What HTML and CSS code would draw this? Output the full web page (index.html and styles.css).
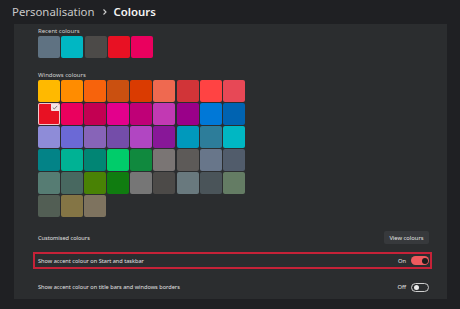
FILE: index.html
```html
<!DOCTYPE html>
<html lang="en">
<head>
<meta charset="utf-8">
<title>Colours</title>
<link rel="stylesheet" href="styles.css">
</head>
<body>
<header class="crumbs">
  <span class="crumb-parent">Personalisation</span>
  <svg class="chev" width="6" height="8" viewBox="0 0 6 8"><path d="M1.5 1.5 L4 4 L1.5 6.5" fill="none" stroke="#cfcfcf" stroke-width="1.1"/></svg>
  <span class="crumb-current">Colours</span>
</header>
<main class="panel">
  <section class="colours">
    <div class="label">Recent colours</div>
    <div class="recent">
      <div class="sw" style="background:#5f7282"></div>
      <div class="sw" style="background:#00b7c3"></div>
      <div class="sw" style="background:#4c4a48"></div>
      <div class="sw" style="background:#e81123"></div>
      <div class="sw" style="background:#ea005e"></div>
    </div>
    <div class="label label-win">Windows colours</div>
    <div class="grid">
      <div class="sw" style="background:#ffb900"></div>
      <div class="sw" style="background:#ff8c00"></div>
      <div class="sw" style="background:#f7630c"></div>
      <div class="sw" style="background:#ca5010"></div>
      <div class="sw" style="background:#da3b01"></div>
      <div class="sw" style="background:#ef6950"></div>
      <div class="sw" style="background:#d13438"></div>
      <div class="sw" style="background:#ff4343"></div>
      <div class="sw" style="background:#e74856"></div>

      <div class="sw selected" style="background:#e81123">
        <span class="badge"><svg width="6" height="5" viewBox="0 0 6 5"><path d="M0.8 2.6 L2.3 4 L5.2 0.9" fill="none" stroke="#7a6a6c" stroke-width="0.9"/></svg></span>
      </div>
      <div class="sw" style="background:#ea005e"></div>
      <div class="sw" style="background:#c30052"></div>
      <div class="sw" style="background:#e3008c"></div>
      <div class="sw" style="background:#bf0077"></div>
      <div class="sw" style="background:#c239b3"></div>
      <div class="sw" style="background:#9a0089"></div>
      <div class="sw" style="background:#0078d7"></div>
      <div class="sw" style="background:#0063b1"></div>

      <div class="sw" style="background:#8e8cd8"></div>
      <div class="sw" style="background:#6b69d6"></div>
      <div class="sw" style="background:#8764b8"></div>
      <div class="sw" style="background:#744da9"></div>
      <div class="sw" style="background:#b146c2"></div>
      <div class="sw" style="background:#881798"></div>
      <div class="sw" style="background:#0099bc"></div>
      <div class="sw" style="background:#2d7d9a"></div>
      <div class="sw" style="background:#00b7c3"></div>

      <div class="sw" style="background:#038387"></div>
      <div class="sw" style="background:#00b294"></div>
      <div class="sw" style="background:#018574"></div>
      <div class="sw" style="background:#00cc6a"></div>
      <div class="sw" style="background:#10893e"></div>
      <div class="sw" style="background:#7a7574"></div>
      <div class="sw" style="background:#5d5a58"></div>
      <div class="sw" style="background:#68768a"></div>
      <div class="sw" style="background:#515c6b"></div>

      <div class="sw" style="background:#567c73"></div>
      <div class="sw" style="background:#486860"></div>
      <div class="sw" style="background:#498205"></div>
      <div class="sw" style="background:#107c10"></div>
      <div class="sw" style="background:#767676"></div>
      <div class="sw" style="background:#4c4a48"></div>
      <div class="sw" style="background:#69797e"></div>
      <div class="sw" style="background:#4a5459"></div>
      <div class="sw" style="background:#647c64"></div>

      <div class="sw" style="background:#525e54"></div>
      <div class="sw" style="background:#847545"></div>
      <div class="sw" style="background:#7e735f"></div>
    </div>
  </section>

  <div class="row">
    <span class="row-text">Customised colours</span>
    <button class="btn">View colours</button>
  </div>

  <div class="row row-hl">
    <div class="hl-box">
      <span class="row-text">Show accent colour on Start and taskbar</span>
      <span class="state">On</span>
      <span class="toggle on"><span class="knob"></span></span>
    </div>
  </div>

  <div class="row row-last">
    <span class="row-text">Show accent colour on title bars and windows borders</span>
    <span class="state">Off</span>
    <span class="toggle off"><span class="knob"></span></span>
  </div>
</main>
</body>
</html>
```

FILE: styles.css
```css
* { box-sizing: border-box; }

html, body {
  margin: 0;
  padding: 0;
}

body {
  width: 460px;
  height: 309px;
  overflow: hidden;
  background: #1f2023;
  font-family: "Noto Sans", "Open Sans", sans-serif;
  color: #e4e4e4;
}

.crumbs {
  height: 24px;
  display: flex;
  align-items: center;
  padding-left: 12px;
  padding-bottom: 1px;
  font-size: 11.4px;
  line-height: 1;
}

.crumb-parent {
  color: #c9c9c9;
}

.chev {
  margin: 1px 6px 0 7px;
}

.crumb-current {
  color: #f4f4f4;
  font-weight: 600;
}

.panel {
  margin: 0 13px 0 14px;
  height: 275px;
  background: #2b2d2f;
  padding-top: 4px;
}

.colours {
  padding-left: 24px;
}

.label {
  font-size: 6px;
  line-height: 7px;
  height: 7px;
  color: #d2d2d2;
  white-space: nowrap;
}

.label-win {
  margin-top: 14px;
}

.recent {
  display: flex;
  gap: 1.3px;
  padding-top: 0.5px;
}

.sw {
  width: 22px;
  height: 22px;
  border-radius: 2px;
}

.grid {
  display: grid;
  grid-template-columns: repeat(9, 22px);
  grid-auto-rows: 22px;
  column-gap: 1.1px;
  row-gap: 1.2px;
  margin-top: 1px;
}

.sw.selected {
  position: relative;
  box-shadow: inset 0 0 0 1px #f1c9ce;
}

.badge {
  position: absolute;
  top: 1px;
  right: 1px;
  width: 8px;
  height: 7px;
  background: #f3e4e6;
  border-radius: 0 1px 0 1px;
  display: flex;
  align-items: center;
  justify-content: center;
}

.row {
  display: flex;
  align-items: center;
  height: 25px;
  padding-left: 24px;
  padding-right: 18px;
}

.colours + .row {
  margin-top: 8px;
}

.row-text {
  font-size: 5.6px;
  color: #e2e2e2;
  flex: 1;
  white-space: nowrap;
}

.btn {
  font-family: inherit;
  font-size: 5.8px;
  color: #e2e2e2;
  background: #37393c;
  border: none;
  border-radius: 2px;
  width: 45px;
  height: 13px;
  padding: 0;
}

.row-hl {
  padding: 2px 15px 6px 19px;
  align-items: flex-start;
}

.hl-box {
  flex: 1;
  height: 17px;
  border: 2px solid #c62238;
  display: flex;
  align-items: center;
  padding-left: 3px;
  padding-right: 1px;
}

.row-last {
  height: 24px;
}

.state {
  font-size: 5.8px;
  color: #e2e2e2;
  margin-right: 5px;
}

.toggle {
  width: 18px;
  height: 9px;
  border-radius: 5px;
  display: flex;
  align-items: center;
  padding: 0 1.5px;
}

.toggle.on {
  background: #ef5a5e;
  justify-content: flex-end;
}

.toggle.on .knob {
  width: 6px;
  height: 6px;
  border-radius: 50%;
  background: #1c1c1c;
}

.toggle.off {
  border: 1px solid #cfcfcf;
  justify-content: flex-start;
}

.toggle.off .knob {
  width: 5px;
  height: 5px;
  border-radius: 50%;
  background: #ececec;
}
```
